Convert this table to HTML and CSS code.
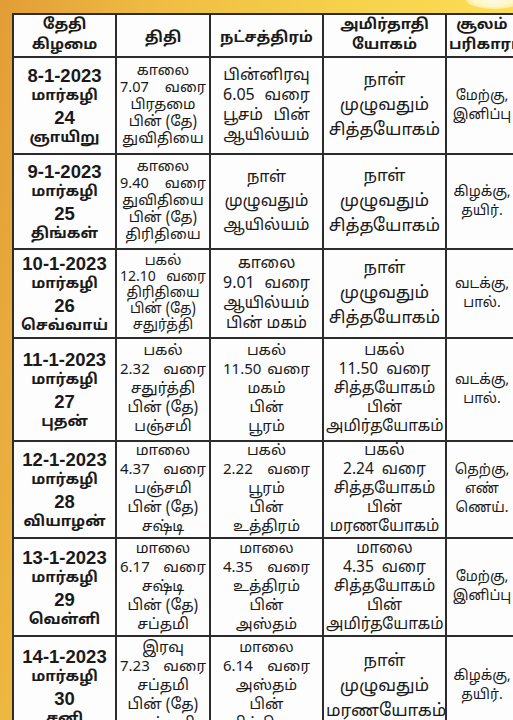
FILE: index.html
```html
<!DOCTYPE html>
<html lang="ta">
<head>
<meta charset="utf-8">
<title>மார்கழி பஞ்சாங்கம்</title>
<link rel="stylesheet" href="styles.css">
</head>
<body>
<div class="page">
  <div class="glare"></div>
  <table class="cal">
    <colgroup>
      <col class="c-date"><col class="c-tithi"><col class="c-nak"><col class="c-amr"><col class="c-sool">
    </colgroup>
    <thead>
      <tr class="r-head">
        <th><div>தேதி</div><div>கிழமை</div></th>
        <th class="low"><div>திதி</div></th>
        <th class="low"><div>நட்சத்திரம்</div></th>
        <th><div>அமிர்தாதி</div><div>யோகம்</div></th>
        <th><div>சூலம்</div><div>பரிகாரம்</div></th>
      </tr>
    </thead>
    <tbody>
      <tr class="r1">
        <td class="date"><div class="num">8-1-2023</div><div class="ta">மார்கழி</div><div class="num">24</div><div class="ta">ஞாயிறு</div></td>
        <td class="five"><div>காலை</div><div class="sp"><span>7.07</span><span>வரை</span></div><div>பிரதமை</div><div>பின் (தே)</div><div>துவிதியை</div></td>
        <td class="four nak"><div>பின்னிரவு</div><div class="sp"><span>6.05</span><span>வரை</span></div><div class="sp"><span>பூசம்</span><span>பின்</span></div><div>ஆயில்யம்</div></td>
        <td class="three"><div>நாள்</div><div>முழுவதும்</div><div>சித்தயோகம்</div></td>
        <td class="sool"><div>மேற்கு,</div><div>இனிப்பு</div></td>
      </tr>
      <tr class="r2">
        <td class="date"><div class="num">9-1-2023</div><div class="ta">மார்கழி</div><div class="num">25</div><div class="ta">திங்கள்</div></td>
        <td class="five"><div>காலை</div><div class="sp"><span>9.40</span><span>வரை</span></div><div>துவிதியை</div><div>பின் (தே)</div><div>திரிதியை</div></td>
        <td class="three nak"><div>நாள்</div><div>முழுவதும்</div><div>ஆயில்யம்</div></td>
        <td class="three"><div>நாள்</div><div>முழுவதும்</div><div>சித்தயோகம்</div></td>
        <td class="sool"><div>கிழக்கு,</div><div>தயிர்.</div></td>
      </tr>
      <tr class="r3">
        <td class="date"><div class="num">10-1-2023</div><div class="ta">மார்கழி</div><div class="num">26</div><div class="ta">செவ்வாய்</div></td>
        <td class="five tight"><div>பகல்</div><div class="sp"><span>12.10</span><span>வரை</span></div><div>திரிதியை</div><div>பின் (தே)</div><div>சதுர்த்தி</div></td>
        <td class="four nak"><div>காலை</div><div class="sp"><span>9.01</span><span>வரை</span></div><div>ஆயில்யம்</div><div>பின் மகம்</div></td>
        <td class="three"><div>நாள்</div><div>முழுவதும்</div><div>சித்தயோகம்</div></td>
        <td class="sool"><div>வடக்கு,</div><div>பால்.</div></td>
      </tr>
      <tr class="r4">
        <td class="date"><div class="num">11-1-2023</div><div class="ta">மார்கழி</div><div class="num">27</div><div class="ta">புதன்</div></td>
        <td class="five"><div>பகல்</div><div class="sp"><span>2.32</span><span>வரை</span></div><div>சதுர்த்தி</div><div>பின் (தே)</div><div>பஞ்சமி</div></td>
        <td class="five nak"><div>பகல்</div><div class="sp"><span>11.50</span><span>வரை</span></div><div>மகம்</div><div>பின்</div><div>பூரம்</div></td>
        <td class="five wide"><div>பகல்</div><div>11.50 &nbsp;வரை</div><div>சித்தயோகம்</div><div>பின்</div><div>அமிர்தயோகம்</div></td>
        <td class="sool"><div>வடக்கு,</div><div>பால்.</div></td>
      </tr>
      <tr class="r5">
        <td class="date"><div class="num">12-1-2023</div><div class="ta">மார்கழி</div><div class="num">28</div><div class="ta">வியாழன்</div></td>
        <td class="five"><div>மாலை</div><div class="sp"><span>4.37</span><span>வரை</span></div><div>பஞ்சமி</div><div>பின் (தே)</div><div>சஷ்டி</div></td>
        <td class="five nak"><div>பகல்</div><div class="sp"><span>2.22</span><span>வரை</span></div><div>பூரம்</div><div>பின்</div><div>உத்திரம்</div></td>
        <td class="five wide"><div>பகல்</div><div>2.24 &nbsp;வரை</div><div>சித்தயோகம்</div><div>பின்</div><div>மரணயோகம்</div></td>
        <td class="sool"><div>தெற்கு,</div><div>எண்</div><div>ணெய்.</div></td>
      </tr>
      <tr class="r6">
        <td class="date"><div class="num">13-1-2023</div><div class="ta">மார்கழி</div><div class="num">29</div><div class="ta">வெள்ளி</div></td>
        <td class="five"><div>மாலை</div><div class="sp"><span>6.17</span><span>வரை</span></div><div>சஷ்டி</div><div>பின் (தே)</div><div>சப்தமி</div></td>
        <td class="five nak"><div>மாலை</div><div class="sp"><span>4.35</span><span>வரை</span></div><div>உத்திரம்</div><div>பின்</div><div>அஸ்தம்</div></td>
        <td class="five wide"><div>மாலை</div><div>4.35 &nbsp;வரை</div><div>சித்தயோகம்</div><div>பின்</div><div>அமிர்தயோகம்</div></td>
        <td class="sool"><div>மேற்கு,</div><div>இனிப்பு</div></td>
      </tr>
      <tr class="r7">
        <td class="date"><div class="num">14-1-2023</div><div class="ta">மார்கழி</div><div class="num">30</div><div class="ta">சனி</div></td>
        <td class="five"><div>இரவு</div><div class="sp"><span>7.23</span><span>வரை</span></div><div>சப்தமி</div><div>பின் (தே)</div><div>அஷ்டமி</div></td>
        <td class="five nak"><div>மாலை</div><div class="sp"><span>6.14</span><span>வரை</span></div><div>அஸ்தம்</div><div>பின்</div><div>சித்திரை</div></td>
        <td class="three"><div>நாள்</div><div>முழுவதும்</div><div>மரணயோகம்</div></td>
        <td class="sool"><div>கிழக்கு,</div><div>தயிர்.</div></td>
      </tr>
    </tbody>
  </table>
</div>
</body>
</html>
```
FILE: styles.css
```css
html, body {
  margin: 0;
  padding: 0;
}
body {
  width: 513px;
  height: 720px;
  overflow: hidden;
}
.page {
  position: relative;
  width: 513px;
  height: 720px;
  overflow: hidden;
  box-sizing: border-box;
  padding: 13px 0 0 12px;
  background: linear-gradient(100deg, #e29d36 0%, #efbd43 25%, #f6d24b 55%, #fde055 85%, #fde463 100%);
  font-family: "Noto Sans Tamil", "Lohit Tamil", "Latha", "Noto Sans", "Liberation Sans", sans-serif;
  color: #1a1a1a;
}
.glare {
  position: absolute;
  top: -9px;
  left: 466px;
  width: 56px;
  height: 18px;
  border-radius: 50%;
  background: radial-gradient(ellipse at center, #fffbe8 0%, #fff6c4 50%, rgba(255, 240, 150, 0) 100%);
}
.cal {
  border-collapse: collapse;
  table-layout: fixed;
  width: 505px;
  background: #fdfdfd;
}
.c-date { width: 103px; }
.c-tithi { width: 94px; }
.c-nak { width: 113px; }
.c-amr { width: 123px; }
.c-sool { width: 72px; }
.cal th, .cal td {
  border: 2px solid #2c2c2c;
  padding: 0 2px;
  text-align: center;
  vertical-align: middle;
  overflow: hidden;
  white-space: nowrap;
}
.cal th {
  font-weight: 700;
  font-size: 15px;
  line-height: 20px;
}
.cal th.low {
  padding-top: 7px;
}
.r-head { height: 43px; }
.r1 { height: 97px; }
.r2 { height: 95px; }
.r3 { height: 86px; }
.r4 { height: 103px; }
.r5 { height: 97px; }
.r6 { height: 98px; }
.r7 { height: 100px; }
.cal .date {
  font-weight: 700;
  line-height: 21px;
  padding-top: 3px;
}
.date .num {
  font-family: "Liberation Sans", Arial, sans-serif;
  font-size: 18.5px;
}
.date .ta {
  font-size: 15px;
}
.cal .five {
  font-size: 14.5px;
  line-height: 17px;
}
.cal .five.tight {
  font-size: 14px;
  line-height: 16px;
}
.cal .five.wide {
  font-size: 15.5px;
}
.r4 .five, .r5 .five, .r6 .five, .r7 .five {
  font-size: 15px;
  line-height: 19px;
}
.r4 .five.wide, .r5 .five.wide, .r6 .five.wide {
  font-size: 15.5px;
}
.cal .four {
  font-size: 16px;
  line-height: 20px;
}
.cal .three {
  font-size: 17px;
  line-height: 25px;
}
.cal .three.nak {
  font-size: 16px;
  line-height: 24px;
}
.cal .nak {
  padding: 0 11px;
}
.cal .sool {
  font-size: 14px;
  line-height: 19px;
  padding: 0;
}
.sp {
  display: flex;
  justify-content: space-between;
  padding: 0 1px;
}
```
